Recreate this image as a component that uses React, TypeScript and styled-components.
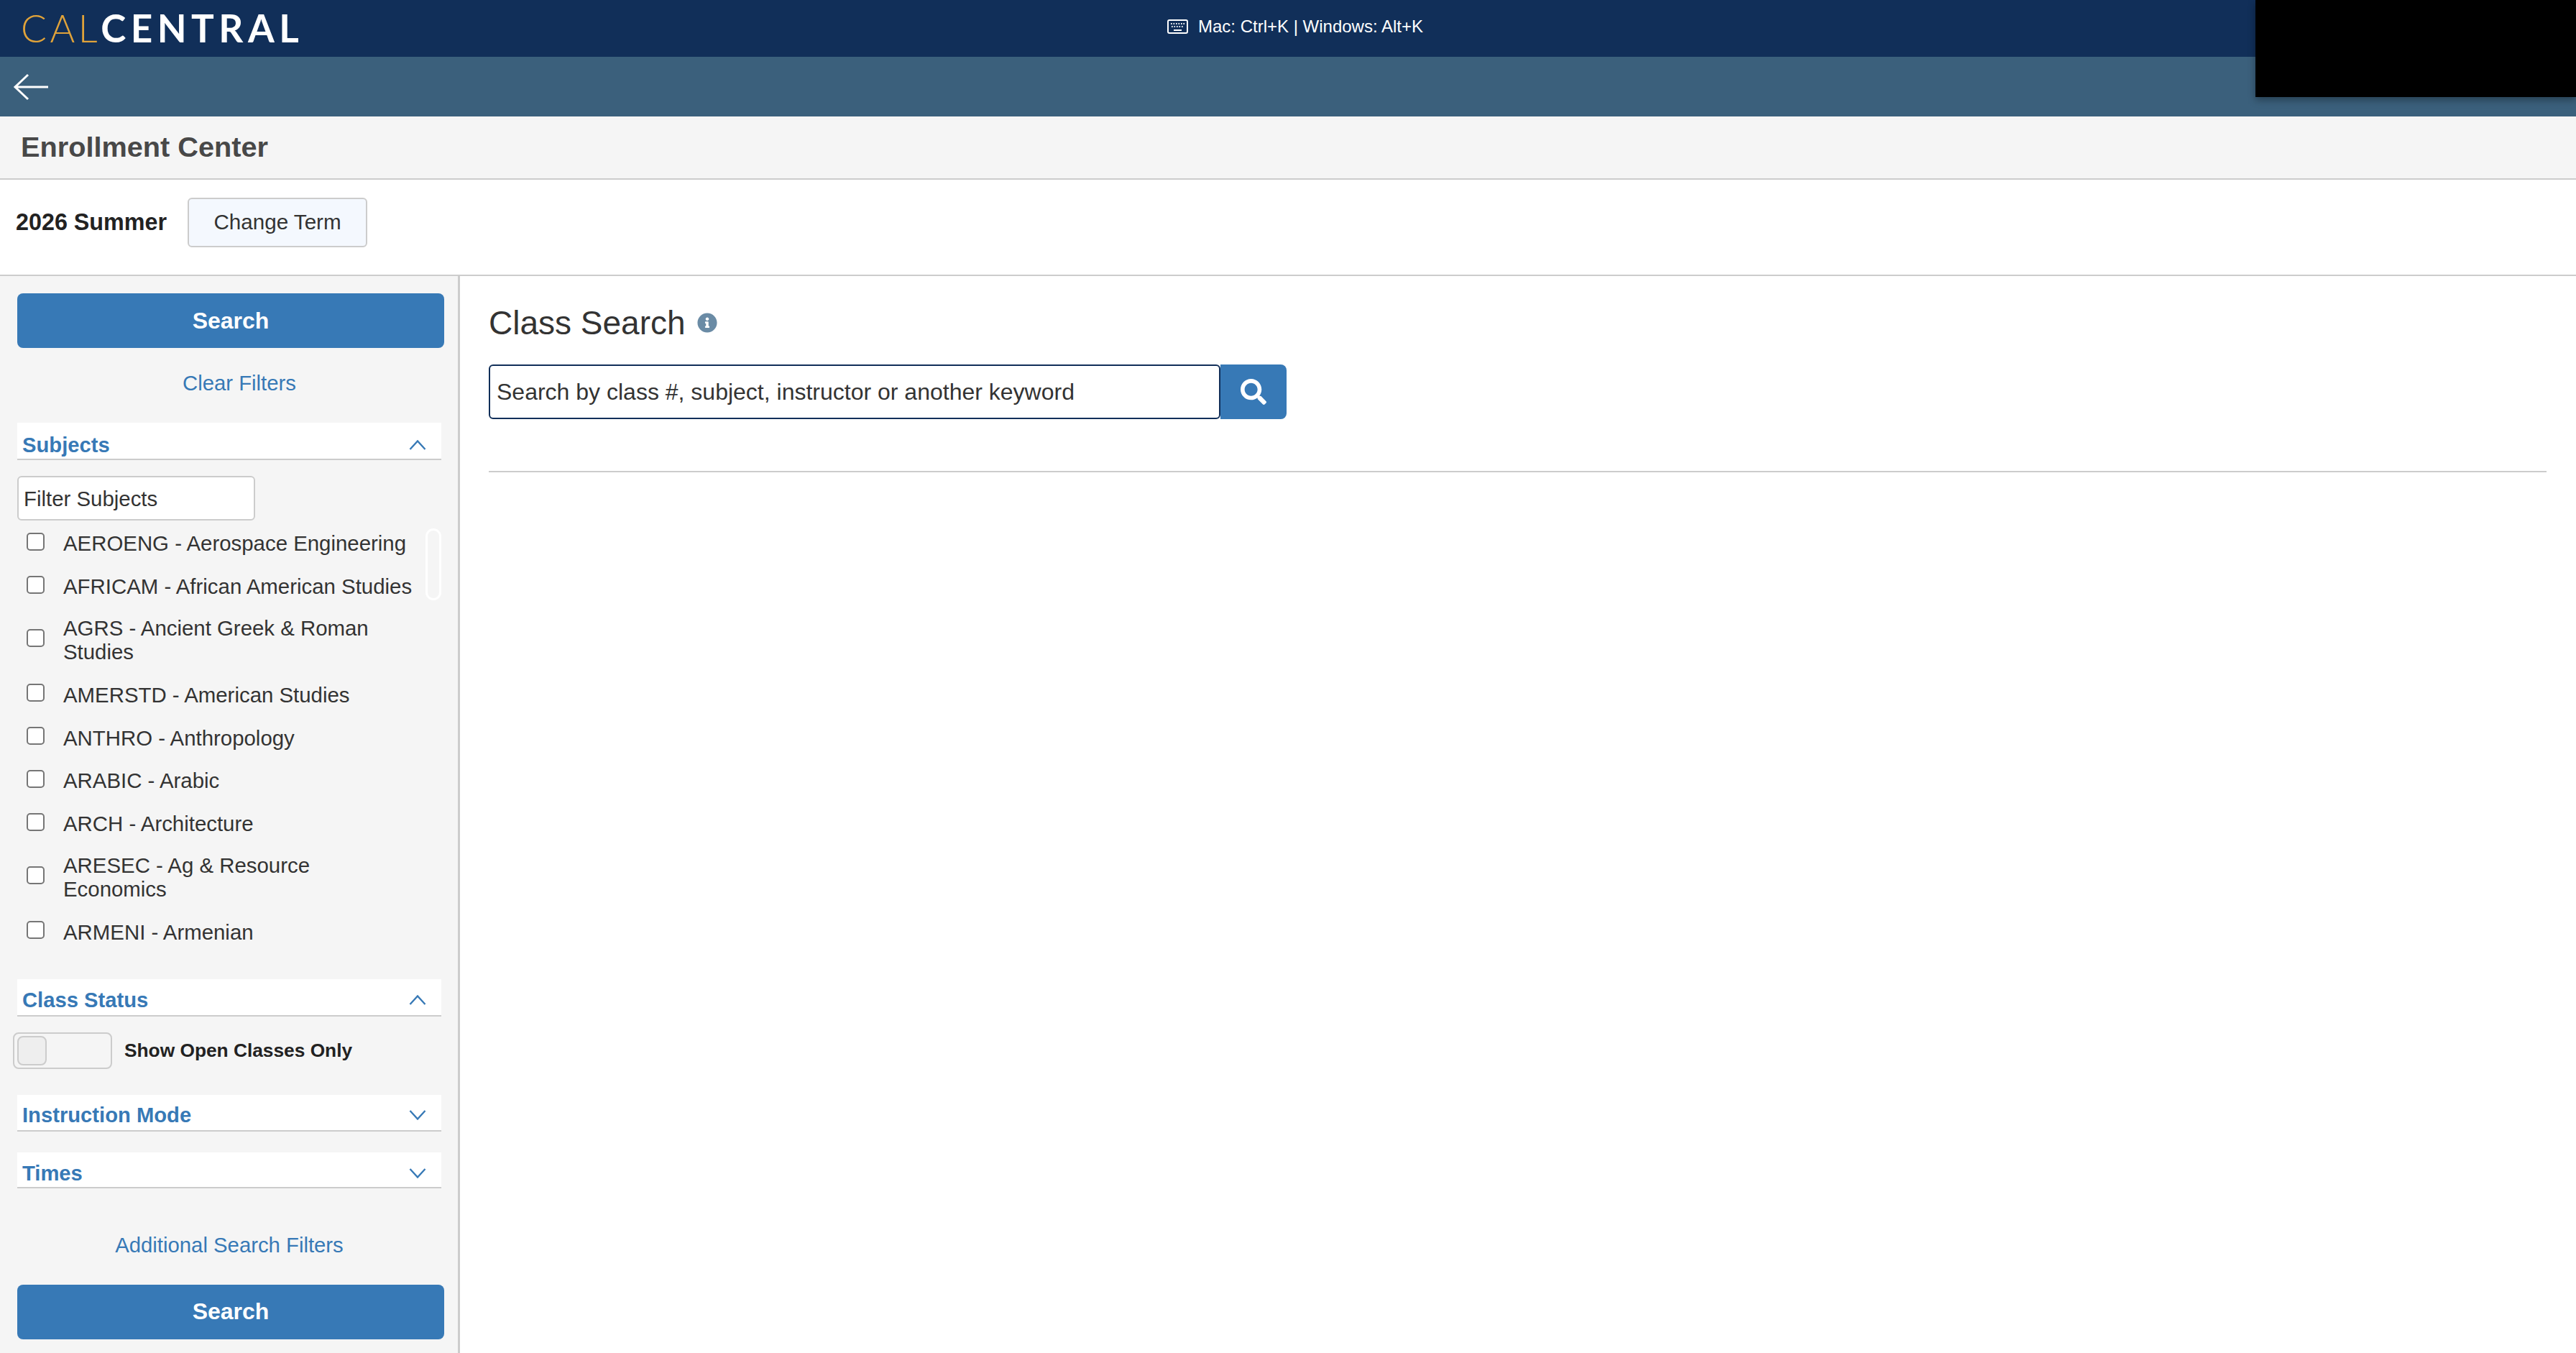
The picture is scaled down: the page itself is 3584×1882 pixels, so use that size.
import React from "react";
import styled, { createGlobalStyle } from "styled-components";
import { FaInfoCircle, FaSearch } from "react-icons/fa";

const Global = createGlobalStyle`
  html, body { margin: 0; padding: 0; background: #fff; }
  body { font-family: "Liberation Sans", Arial, sans-serif; color: #333; }
  * { box-sizing: border-box; }
`;

const Page = styled.div`
  position: relative;
  width: 3584px;
  height: 1882px;
  overflow: hidden;
  display: flex;
  flex-direction: column;
`;

const TopBar = styled.header`
  position: relative;
  height: 79px;
  flex: none;
  background: #112f59;
  display: flex;
  align-items: center;
  padding: 0 0 1px 29px;
`;

const Logo = styled.div`
  font-family: Lato, "Open Sans", sans-serif;
  font-size: 53px;
  line-height: 78px;
  letter-spacing: 6.5px;
  white-space: nowrap;
`;
const LogoCal = styled.span`
  color: #e0a33a;
  font-weight: 300;
  letter-spacing: 4.6px;
`;
const LogoCentral = styled.span`
  color: #fff;
  font-weight: 700;
`;

const ShortcutHint = styled.div`
  position: absolute;
  left: 1624px;
  top: 0;
  height: 73px;
  display: flex;
  align-items: center;
  gap: 14px;
  color: #fff;
  font-size: 24px;
  white-space: nowrap;
`;

const NavBar = styled.nav`
  height: 83px;
  flex: none;
  background: #3b607c;
  display: flex;
  align-items: center;
  padding: 1px 0 0 18px;
`;

const Masked = styled.div`
  position: absolute;
  top: 0;
  right: 0;
  width: 446px;
  height: 135px;
  background: #000;
  box-shadow: 0 4px 10px rgba(0, 0, 0, 0.35);
`;

const TitleBar = styled.div`
  height: 88px;
  flex: none;
  background: #f5f5f5;
  border-bottom: 2px solid #ccc;
  display: flex;
  align-items: center;
  padding-left: 29px;
  padding-bottom: 2px;
`;
const Title = styled.h1`
  margin: 0;
  font-size: 39.7px;
  font-weight: 700;
  color: #484848;
`;

const TermRow = styled.div`
  height: 134px;
  flex: none;
  border-bottom: 2px solid #ccc;
  display: flex;
  align-items: center;
  padding: 0 0 14px 22px;
  gap: 29px;
`;
const TermName = styled.div`
  font-size: 32.3px;
  font-weight: 700;
  color: #222;
`;
const ChangeTerm = styled.button`
  width: 250px;
  height: 69px;
  background: #f4f8fe;
  border: 2px solid #ccc;
  border-radius: 6px;
  font: 400 29.6px "Liberation Sans", Arial, sans-serif;
  color: #333;
  padding: 0;
`;

const Body = styled.div`
  flex: 1;
  display: flex;
  min-height: 0;
`;

const Sidebar = styled.aside`
  width: 640px;
  flex: none;
  background: #f5f5f5;
  border-right: 3px solid #ccc;
  padding-top: 24px;
  display: flex;
  flex-direction: column;
  align-items: flex-start;
`;

const SearchButton = styled.button<{ $top?: number }>`
  margin: ${(p) => p.$top ?? 0}px 0 0 24px;
  width: 594px;
  height: 76px;
  flex: none;
  background: #3779b6;
  border: none;
  border-radius: 8px;
  color: #fff;
  font: 700 32px "Liberation Sans", Arial, sans-serif;
`;

const SideLink = styled.a<{ $top: number; $left: number }>`
  display: block;
  width: 594px;
  margin: ${(p) => p.$top}px 0 0 ${(p) => p.$left}px;
  text-align: center;
  font-size: 29.3px;
  line-height: 33px;
  color: #3779b6;
`;

const SectionHeader = styled.div<{ $top: number; $height?: number; $pad?: number }>`
  margin: ${(p) => p.$top}px 0 0 24px;
  width: 590px;
  height: ${(p) => p.$height ?? 52}px;
  flex: none;
  background: #fff;
  border-bottom: 2px solid #ccc;
  padding: ${(p) => p.$pad ?? 13}px 21px 0 7px;
  display: flex;
  align-items: flex-start;
  justify-content: space-between;
`;
const SectionTitle = styled.div`
  font-size: 29.2px;
  line-height: 33px;
  font-weight: 700;
  color: #3779b6;
`;
const ChevronIcon = styled.svg`
  width: 24px;
  height: 14px;
  margin-top: 9px;
  fill: none;
  stroke: #3779b6;
  stroke-width: 2.4;
`;

const FilterInput = styled.div`
  margin: 22px 0 0 24px;
  width: 331px;
  height: 62px;
  flex: none;
  background: #fff;
  border: 2px solid #ccc;
  border-radius: 6px;
  padding: 2px 0 0 7px;
  display: flex;
  align-items: center;
  font-size: 29.4px;
  color: #333;
`;

const SubjectList = styled.div`
  position: relative;
  margin-top: 2px;
  width: 636px;
  flex: none;
`;
const SubjectRow = styled.label<{ $double: boolean }>`
  display: flex;
  align-items: center;
  padding: ${(p) => (p.$double ? "11.4px" : "13.4px")} 0 13.4px 37px;
  gap: 26px;
`;
const Checkbox = styled.span`
  width: 25px;
  height: 25px;
  flex: none;
  margin-bottom: 5px;
  background: #fff;
  border: 2px solid #767676;
  border-radius: 5px;
`;
const SubjectText = styled.span`
  font-size: 29.4px;
  line-height: 33px;
  color: #333;
  white-space: pre-line;
`;
const ScrollThumb = styled.div`
  position: absolute;
  left: 592px;
  top: 9px;
  width: 22px;
  height: 100px;
  background: #f5f5f5;
  border: 3px solid #fff;
  border-radius: 11px;
`;

const ToggleRow = styled.div`
  margin: 22px 0 0 18px;
  display: flex;
  align-items: center;
  gap: 17px;
  flex: none;
`;
const Toggle = styled.div`
  width: 138px;
  height: 51px;
  background: #f5f5f5;
  border: 2px solid #ccc;
  border-radius: 8px;
  padding: 3px 4px;
`;
const ToggleKnob = styled.div`
  width: 41px;
  height: 41px;
  background: #eee;
  border: 2px solid #ccc;
  border-radius: 8px;
`;
const ToggleLabel = styled.div`
  font-size: 26.3px;
  font-weight: 700;
  color: #222;
`;

const Main = styled.main`
  flex: 1;
  padding: 42px 41px 0 40px;
`;
const Heading = styled.div`
  display: flex;
  align-items: center;
  gap: 16px;
  height: 46px;
`;
const HeadingText = styled.h2`
  margin: 0;
  font-size: 46px;
  font-weight: 400;
  color: #333;
`;
const InfoIcon = styled(FaInfoCircle)`
  width: 28px;
  height: 28px;
  color: #6a8ba5;
`;
const SearchGroup = styled.div`
  margin-top: 35px;
  display: flex;
  height: 76px;
`;
const SearchField = styled.div`
  width: 1018px;
  height: 76px;
  background: #fff;
  border: 2px solid #112f59;
  border-radius: 6px;
  display: flex;
  align-items: center;
  padding-left: 9px;
  font-size: 32px;
  color: #333;
`;
const SearchIconButton = styled.button`
  width: 92px;
  height: 76px;
  background: #3779b6;
  border: none;
  border-radius: 0 8px 8px 0;
  display: flex;
  align-items: center;
  justify-content: center;
  color: #fff;
  padding: 0;
`;
const Divider = styled.hr`
  margin: 72px 0 0;
  border: none;
  border-top: 2px solid #ccc;
`;

const subjects = [
  "AEROENG - Aerospace Engineering",
  "AFRICAM - African American Studies",
  "AGRS - Ancient Greek & Roman\nStudies",
  "AMERSTD - American Studies",
  "ANTHRO - Anthropology",
  "ARABIC - Arabic",
  "ARCH - Architecture",
  "ARESEC - Ag & Resource\nEconomics",
  "ARMENI - Armenian",
];

const Chevron = ({ up }: { up?: boolean }) => (
  <ChevronIcon viewBox="0 0 24 14">
    <path d={up ? "M1.5 13 12 1.5 22.5 13" : "M1.5 1 12 12.5 22.5 1"} />
  </ChevronIcon>
);

export default function App() {
  return (
    <Page>
      <Global />
      <TopBar>
        <Logo>
          <LogoCal>CAL</LogoCal>
          <LogoCentral>CENTRAL</LogoCentral>
        </Logo>
        <ShortcutHint>
          <svg width="29" height="20" viewBox="0 0 29 20" fill="none">
            <rect x="1" y="1" width="27" height="18" rx="2" stroke="#fff" strokeWidth="2" />
            <path
              d="M5 6h1.6M8.5 6h1.6M12 6h1.6M15.5 6h1.6M19 6h1.6M22.4 6H24M6 10h1.6M9.5 10h1.6M13 10h1.6M16.5 10h1.6M20 10h1.6M9 15h11"
              stroke="#fff"
              strokeWidth="2"
            />
          </svg>
          Mac: Ctrl+K | Windows: Alt+K
        </ShortcutHint>
      </TopBar>
      <NavBar>
        <svg width="50" height="38" viewBox="0 0 50 38" fill="none" stroke="#fff" strokeWidth="3">
          <path d="M21 2 3 19l18 17M3 19h46" />
        </svg>
      </NavBar>
      <Masked />
      <TitleBar>
        <Title>Enrollment Center</Title>
      </TitleBar>
      <TermRow>
        <TermName>2026 Summer</TermName>
        <ChangeTerm>Change Term</ChangeTerm>
      </TermRow>
      <Body>
        <Sidebar>
          <SearchButton>Search</SearchButton>
          <SideLink $top={32} $left={36}>Clear Filters</SideLink>
          <SectionHeader $top={39} $pad={15}>
            <SectionTitle>Subjects</SectionTitle>
            <Chevron up />
          </SectionHeader>
          <FilterInput>Filter Subjects</FilterInput>
          <SubjectList>
            {subjects.map((s) => (
              <SubjectRow key={s} $double={s.includes("\n")}>
                <Checkbox />
                <SubjectText>{s}</SubjectText>
              </SubjectRow>
            ))}
            <ScrollThumb />
          </SubjectList>
          <SectionHeader $top={35.8}>
            <SectionTitle>Class Status</SectionTitle>
            <Chevron up />
          </SectionHeader>
          <ToggleRow>
            <Toggle>
              <ToggleKnob />
            </Toggle>
            <ToggleLabel>Show Open Classes Only</ToggleLabel>
          </ToggleRow>
          <SectionHeader $top={36} $height={51} $pad={12}>
            <SectionTitle>Instruction Mode</SectionTitle>
            <Chevron />
          </SectionHeader>
          <SectionHeader $top={29} $height={50} $pad={13}>
            <SectionTitle>Times</SectionTitle>
            <Chevron />
          </SectionHeader>
          <SideLink $top={62} $left={22}>Additional Search Filters</SideLink>
          <SearchButton $top={39}>Search</SearchButton>
        </Sidebar>
        <Main>
          <Heading>
            <HeadingText>Class Search</HeadingText>
            <InfoIcon />
          </Heading>
          <SearchGroup>
            <SearchField>Search by class #, subject, instructor or another keyword</SearchField>
            <SearchIconButton>
              <FaSearch size={36} />
            </SearchIconButton>
          </SearchGroup>
          <Divider />
        </Main>
      </Body>
    </Page>
  );
}
